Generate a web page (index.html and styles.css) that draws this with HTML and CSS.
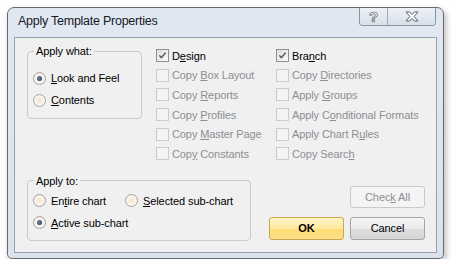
FILE: index.html
```html
<!DOCTYPE html>
<html lang="en">
<head>
    <meta charset="UTF-8">
    <title>Apply Template Properties</title>
    <link rel="stylesheet" href="styles.css">
</head>
<body>
    <div class="window">
        <div class="titlebar">
            <span class="title">Apply Template Properties</span>
            <div class="caption-buttons">
                <span class="cap help">?</span>
                <span class="cap close">
                    <svg width="14" height="11" viewBox="0 0 14 11">
                        <polygon points="1,1 4.6,1 7,3.6 9.4,1 13,1 9,5.5 13,10 9.4,10 7,7.4 4.6,10 1,10 5,5.5" fill="#fff" stroke="#5a6068" stroke-width="1" stroke-linejoin="round"/>
                    </svg>
                </span>
            </div>
        </div>

        <div class="client">
            <div class="top">
                <fieldset class="group what">
                    <legend>Apply what:</legend>
                    <div class="option first"><span class="radio checked"></span><span><u>L</u>ook and Feel</span></div>
                    <div class="option"><span class="radio"></span><span><u>C</u>ontents</span></div>
                </fieldset>

                <div class="checks col1">
                    <div class="check"><span class="box checked"><svg width="11" height="11" viewBox="0 0 11 11"><path d="M2.4 5.4 L4.4 7.6 L8.6 2.6" stroke="#4a4e55" stroke-width="1.4" fill="none"/></svg></span><span>D<u>e</u>sign</span></div>
                    <div class="check disabled"><span class="box"></span><span>Copy <u>B</u>ox Layout</span></div>
                    <div class="check disabled"><span class="box"></span><span>Copy <u>R</u>eports</span></div>
                    <div class="check disabled"><span class="box"></span><span>Copy <u>P</u>rofiles</span></div>
                    <div class="check disabled"><span class="box"></span><span>Copy <u>M</u>aster Page</span></div>
                    <div class="check disabled"><span class="box"></span><span>Cop<u>y</u> Constants</span></div>
                </div>

                <div class="checks col2">
                    <div class="check"><span class="box checked"><svg width="11" height="11" viewBox="0 0 11 11"><path d="M2.4 5.4 L4.4 7.6 L8.6 2.6" stroke="#4a4e55" stroke-width="1.4" fill="none"/></svg></span><span>Bra<u>n</u>ch</span></div>
                    <div class="check disabled"><span class="box"></span><span>Copy <u>D</u>irectories</span></div>
                    <div class="check disabled"><span class="box"></span><span>Apply <u>G</u>roups</span></div>
                    <div class="check disabled"><span class="box"></span><span>Apply C<u>o</u>nditional Formats</span></div>
                    <div class="check disabled"><span class="box"></span><span>Apply Chart R<u>u</u>les</span></div>
                    <div class="check disabled"><span class="box"></span><span>Copy Searc<u>h</u></span></div>
                </div>
            </div>

            <div class="bottom">
                <fieldset class="group to">
                    <legend>Apply to:</legend>
                    <div class="option-row">
                        <div class="option wide"><span class="radio"></span><span>En<u>t</u>ire chart</span></div>
                        <div class="option"><span class="radio"></span><span><u>S</u>elected sub-chart</span></div>
                    </div>
                    <div class="option"><span class="radio checked"></span><span><u>A</u>ctive sub-chart</span></div>
                </fieldset>

                <div class="buttons">
                    <button class="btn disabled">Chec<u>k</u> All</button>
                    <div class="btn-row">
                        <button class="btn ok">OK</button>
                        <button class="btn">Cancel</button>
                    </div>
                </div>
            </div>
        </div>
    </div>
</body>
</html>
```

FILE: styles.css
```css
body {
    margin: 0;
    background-color: #fff;
    font-family: "Liberation Sans", Arial, sans-serif;
    font-size: 11px;
    letter-spacing: -0.1px;
    color: #000;
}

.window {
    box-sizing: border-box;
    margin: 7px 0 0 7px;
    width: 437px;
    height: 252px;
    display: flex;
    flex-direction: column;
    border: 1px solid #656b73;
    border-radius: 7px 7px 5px 5px;
    background: linear-gradient(#e1e8f1, #dae2ec);
    box-shadow: 2px 3px 6px rgba(0, 0, 0, 0.28);
}

.titlebar {
    height: 29px;
    display: flex;
    align-items: flex-start;
    justify-content: space-between;
}

.title {
    margin: 6px 0 0 10px;
    font-size: 12.5px;
    letter-spacing: -0.25px;
    color: #15191f;
}

.caption-buttons {
    display: flex;
    margin-right: 7px;
    border: 1px solid #8a949f;
    border-top: none;
    border-radius: 0 0 4px 4px;
    overflow: hidden;
}

.cap {
    height: 17px;
    display: flex;
    align-items: center;
    justify-content: center;
    background: linear-gradient(#eef2f7, #d8e0ea);
}

.help {
    width: 27px;
    border-right: 1px solid #a3acb6;
    font-size: 15px;
    font-weight: bold;
    color: #fff;
    -webkit-text-stroke: 0.7px #5a6068;
}

.close {
    width: 47px;
}

.client {
    flex: 1;
    margin: 0 6px 5px;
    padding: 6px 11px 0 12px;
    border: 1px solid #97a2ae;
    background-color: #f0f0f1;
}

.top {
    display: flex;
    align-items: flex-start;
}

.group {
    box-sizing: border-box;
    margin: 0;
    padding: 0 0 0 5px;
    border: 1px solid #c4cbd3;
    border-radius: 4px;
}

.group legend {
    margin-left: 1px;
    padding: 0 2px;
    line-height: 14px;
}

.what {
    width: 115px;
    height: 75px;
}

.to {
    width: 224px;
    height: 67px;
}

.option {
    height: 22px;
    display: flex;
    align-items: center;
    gap: 5px;
}

.what .first {
    margin-top: 9px;
}

.option-row {
    display: flex;
    margin-top: 2px;
}

.option.wide {
    width: 92px;
}

.radio {
    box-sizing: border-box;
    width: 13px;
    height: 13px;
    flex: none;
    display: flex;
    align-items: center;
    justify-content: center;
    border: 1px solid #a3a3a3;
    border-radius: 50%;
    background: radial-gradient(circle, #f3e2cb 0%, #fbf5ec 55%, #e6e6e6 100%);
}

.radio.checked::after {
    content: "";
    width: 5px;
    height: 5px;
    border-radius: 50%;
    background: radial-gradient(circle at 40% 40%, #6d86b4, #1d2b48);
}

.checks {
    margin-top: 2px;
}

.col1 {
    margin-left: 14px;
    width: 120px;
}

.check {
    height: 19.6px;
    display: flex;
    align-items: center;
    gap: 3px;
    white-space: nowrap;
}

.box {
    box-sizing: border-box;
    width: 13px;
    height: 13px;
    flex: none;
    display: flex;
    align-items: center;
    justify-content: center;
    border: 1px solid #8e8f8f;
    background: linear-gradient(135deg, #dedede, #fbfbfb);
}

.check.disabled {
    color: #8e8e92;
}

.check.disabled .box {
    border-color: #cbcbcb;
    background: #f4f4f4;
}

.bottom {
    display: flex;
    align-items: flex-start;
    margin-top: 10px;
}

.buttons {
    margin-left: auto;
    margin-top: 12px;
    display: flex;
    flex-direction: column;
    align-items: flex-end;
}

.btn {
    box-sizing: border-box;
    width: 75px;
    height: 23px;
    padding: 0;
    font-family: inherit;
    font-size: 11px;
    letter-spacing: -0.1px;
    color: #000;
    border: 1px solid #a5a5a5;
    border-radius: 3px;
    background: linear-gradient(#f4f4f4 0%, #ececec 50%, #dddddd 51%, #d6d6d6 100%);
}

.btn.disabled {
    height: 22px;
    color: #8e8e92;
    border-color: #cacaca;
    background: #f4f4f4;
}

.btn-row {
    display: flex;
    gap: 6px;
    margin-top: 9px;
}

.btn.ok {
    font-weight: bold;
    border-color: #c9a74c;
    background: linear-gradient(#fff4c8 0%, #fee9a0 50%, #fddc74 51%, #fde08a 100%);
}
```
